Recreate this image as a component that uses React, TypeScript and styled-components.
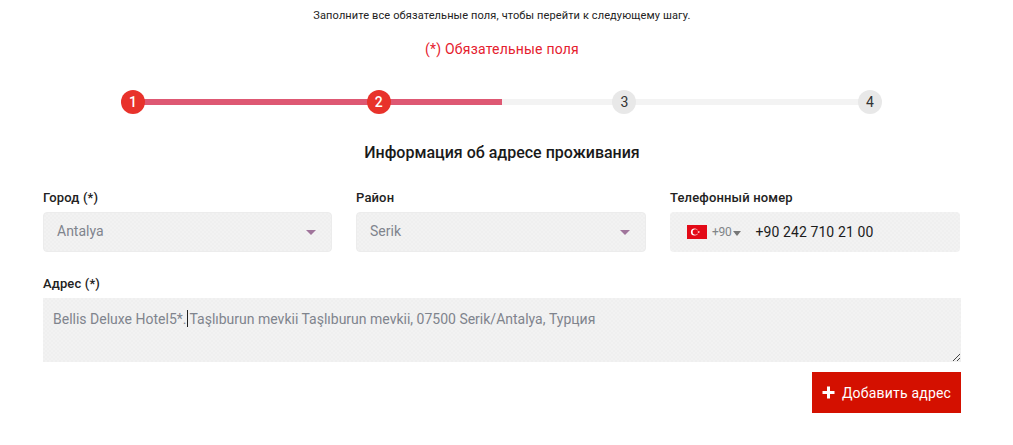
import React from "react";
import styled, { createGlobalStyle } from "styled-components";

const Global = createGlobalStyle`
  html, body { margin: 0; padding: 0; background: #fff; }
  body { font-family: Roboto, "Liberation Sans", sans-serif; width: 1013px; height: 445px; overflow: hidden; }
  * { box-sizing: border-box; }
`;

const dither = `#f0f0f0 repeating-conic-gradient(#efefef 0 25%, #f2f2f2 0 50%) 0 0 / 4px 4px`;

const Page = styled.div`
  width: 1013px;
  height: 445px;
  padding: 9px 52px 0 43px;
  display: flex;
  flex-direction: column;
`;
const Hint = styled.p`
  margin: 0;
  font-size: 11px;
  line-height: 14px;
  color: #222;
  text-align: center;
  letter-spacing: 0.12px;
`;
const Required = styled.p`
  margin: 17px 0 0;
  font-size: 14px;
  line-height: 18px;
  color: #e5202e;
  text-align: center;
  letter-spacing: 0.2px;
`;
const Stepper = styled.div`
  position: relative;
  width: 761px;
  height: 24px;
  margin: 32px 0 0 78px;
  display: flex;
  justify-content: space-between;
  align-items: center;
`;
const Track = styled.div`
  position: absolute;
  left: 12px;
  right: 12px;
  top: 9px;
  height: 6px;
  background: #f3f3f3;
`;
const Progress = styled.div`
  position: absolute;
  left: 12px;
  top: 9px;
  height: 6px;
  width: 369px;
  background: #de5873;
`;
const Step = styled.div<{ $active?: boolean }>`
  position: relative;
  width: 24px;
  height: 24px;
  border-radius: 50%;
  display: flex;
  align-items: center;
  justify-content: center;
  font-size: 14px;
  background: ${(p) => (p.$active ? "#e8322b" : "#e8e8e8")};
  color: ${(p) => (p.$active ? "#fff" : "#333")};
  font-weight: ${(p) => (p.$active ? 500 : 400)};
`;
const Title = styled.h2`
  margin: 29px 0 0;
  font-size: 16px;
  line-height: 20px;
  font-weight: 500;
  color: #1a1a1a;
  text-align: center;
`;
const Row = styled.div`
  display: grid;
  grid-template-columns: 289px 290px 290px;
  column-gap: 24px;
  margin-top: 26px;
`;
const Field = styled.div`
  display: flex;
  flex-direction: column;
`;
const Label = styled.label`
  font-size: 13px;
  line-height: 17px;
  font-weight: 500;
  color: #222;
  margin-bottom: 6px;
  letter-spacing: 0.15px;
`;
const SelectBox = styled.div`
  height: 40px;
  border: 1px solid #ececec;
  border-radius: 4px;
  background: ${dither};
  padding: 0 15px 2px 13px;
  display: flex;
  align-items: center;
  justify-content: space-between;
  font-size: 14px;
  color: #7f848d;
`;
const Caret = styled.span<{ $color?: string; $size?: number }>`
  width: 0;
  height: 0;
  margin-top: 2px;
  border-left: ${(p) => p.$size ?? 5}px solid transparent;
  border-right: ${(p) => p.$size ?? 5}px solid transparent;
  border-top: 5px solid ${(p) => p.$color ?? "#a0759b"};
`;
const PhoneBox = styled.div`
  height: 40px;
  border-radius: 4px;
  background: ${dither};
  padding-left: 17px;
  display: flex;
  align-items: center;
`;
const Dial = styled.span`
  font-size: 12px;
  letter-spacing: -0.3px;
  color: #808488;
  margin: 0 2px 0 5px;
`;
const PhoneText = styled.span`
  font-size: 14px;
  color: #1c1c1c;
  margin-left: 14px;
  letter-spacing: 0.1px;
`;
const AddressField = styled.div`
  margin-top: 23px;
  width: 918px;
  display: flex;
  flex-direction: column;
`;
const AddressBox = styled.div`
  position: relative;
  height: 64px;
  background: ${dither};
  padding: 12px 10px;
  font-size: 14px;
  line-height: 18px;
  color: #7f848d;
`;
const Cursor = styled.span`
  display: inline-block;
  width: 1px;
  height: 17px;
  background: #222;
  vertical-align: -3px;
  margin: 0 1px;
`;
const Grip = styled.svg`
  position: absolute;
  right: 0;
  bottom: 0;
`;
const Footer = styled.div`
  width: 918px;
  display: flex;
  justify-content: flex-end;
  margin-top: 10px;
`;
const AddButton = styled.button`
  width: 149px;
  height: 41px;
  border: none;
  background: #d41000;
  color: #fff;
  font-family: inherit;
  font-size: 14px;
  font-weight: 400;
  letter-spacing: 0.2px;
  display: flex;
  align-items: center;
  justify-content: center;
  gap: 7px;
  padding: 0;
`;

const Flag = () => (
  <svg width="20" height="14" viewBox="0 0 20 14">
    <rect width="20" height="14" fill="#e30a17" />
    <circle cx="7.5" cy="7" r="3.6" fill="#fff" />
    <circle cx="8.4" cy="7" r="2.8" fill="#e30a17" />
    <polygon points="10.2,7 12.8,6 11.3,8.2 11.3,5.8 12.8,8" fill="#fff" />
  </svg>
);

export default function App() {
  return (
    <Page>
      <Global />
      <Hint>Заполните все обязательные поля, чтобы перейти к следующему шагу.</Hint>
      <Required>(*) Обязательные поля</Required>
      <Stepper>
        <Track />
        <Progress />
        <Step $active>1</Step>
        <Step $active>2</Step>
        <Step>3</Step>
        <Step>4</Step>
      </Stepper>
      <Title>Информация об адресе проживания</Title>
      <Row>
        <Field>
          <Label>Город (*)</Label>
          <SelectBox>
            Antalya
            <Caret />
          </SelectBox>
        </Field>
        <Field>
          <Label>Район</Label>
          <SelectBox>
            Serik
            <Caret />
          </SelectBox>
        </Field>
        <Field>
          <Label>Телефонный номер</Label>
          <PhoneBox>
            <Flag />
            <Dial>+90</Dial>
            <Caret $color="#777" $size={4.5} />
            <PhoneText>+90 242 710 21 00</PhoneText>
          </PhoneBox>
        </Field>
      </Row>
      <AddressField>
        <Label>Адрес (*)</Label>
        <AddressBox>
          Bellis Deluxe Hotel5*.<Cursor />Taşlıburun mevkii Taşlıburun mevkii, 07500 Serik/Antalya, Турция
          <Grip width="9" height="9" viewBox="0 0 9 9">
            <path d="M1 8 L8 1 M5 8 L8 5" stroke="#444" strokeWidth="1" fill="none" />
          </Grip>
        </AddressBox>
      </AddressField>
      <Footer>
        <AddButton>
          <svg width="13" height="13" viewBox="0 0 13 13">
            <path d="M6.5 0.5 V12.5 M0.5 6.5 H12.5" stroke="#fff" strokeWidth="3" />
          </svg>
          Добавить адрес
        </AddButton>
      </Footer>
    </Page>
  );
}
